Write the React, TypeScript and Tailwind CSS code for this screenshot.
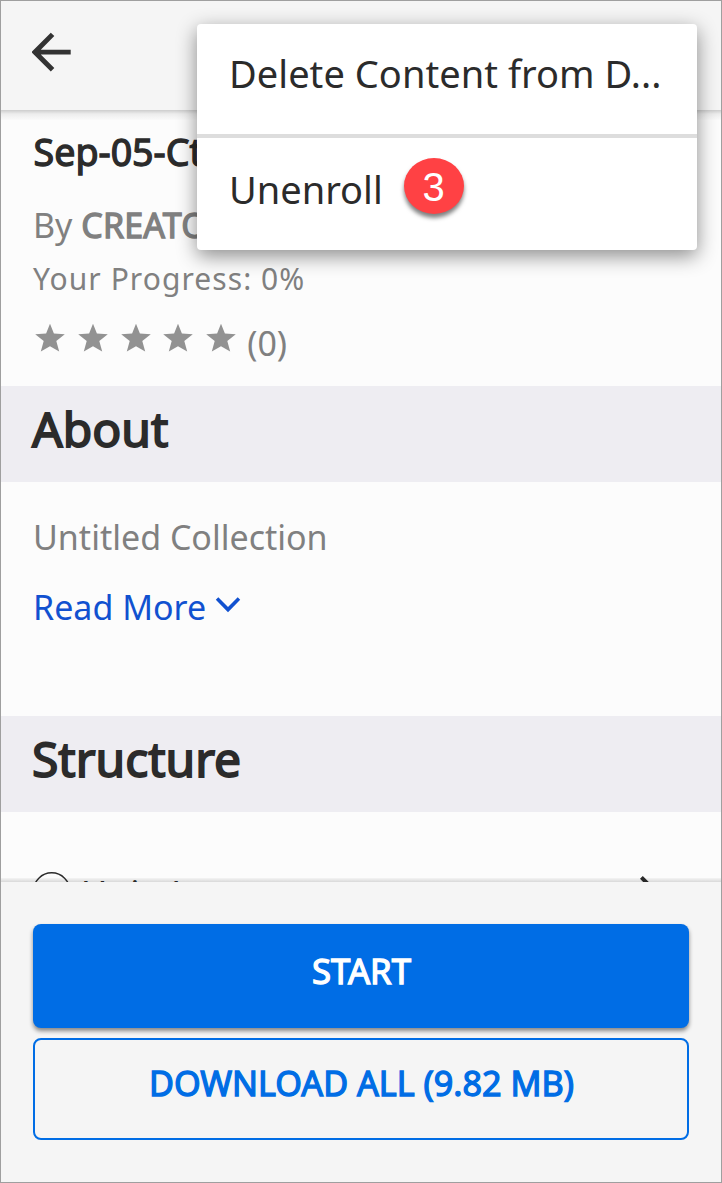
import React from "react";

function BackArrow() {
  return (
    <svg className="h-10 w-10 fill-[#333]" viewBox="0 0 40 40">
      <path d="M18.8 0.7 22.3 4 8.8 17.7H38.7V22.5H8.8L22.3 36.1 18.8 39.5 -0.6 20.1Z" />
    </svg>
  );
}

function Star() {
  return (
    <svg className="h-7 w-[30px] fill-[#929292]" viewBox="0 0 30 28">
      <path d="M15 -0.3 18.9 9.5 29.8 10.2 21.3 16.9 24.2 27.6 15 22.3 5.8 27.6 8.7 16.9 0.2 10.2 11.1 9.5Z" />
    </svg>
  );
}

function SectionHeading({ children }: { children: React.ReactNode }) {
  return (
    <h2 className="h-24 shrink-0 bg-[#eeedf2] pl-[31px] text-[48px] leading-[86px] text-[#2b2b2b] [-webkit-text-stroke:1.8px_#2b2b2b]">
      {children}
    </h2>
  );
}

export default function App() {
  return (
    <div className="relative flex h-[1183px] w-[722px] flex-col overflow-hidden border border-[#9f9f9f] bg-[#fcfcfc] font-['Noto_Sans',sans-serif] whitespace-nowrap text-[#808080]">
      <header className="relative flex h-[109px] shrink-0 items-start bg-[#f5f5f5] pt-[31px] pl-[31px]">
        <BackArrow />
        <div className="absolute inset-x-0 top-full h-[10px] bg-linear-to-b from-[#cdcdcd] via-[#ededed] via-40% to-[#fafafa]" />
      </header>

      <main className="flex h-[772px] shrink-0 flex-col overflow-hidden">
        <div className="flex h-[276px] shrink-0 flex-col pt-[21px] pl-8">
          <h1 className="pl-[0.6px] text-[37.6px] leading-[41px] text-[#2b2b2b] [-webkit-text-stroke:1.3px_#2b2b2b]">Sep-05-Ctc</h1>
          <p className="mt-[31px] text-[34px] leading-[45px]">
            By <span className="tracking-[0.15px] [-webkit-text-stroke:1.3px_#808080]">CREATOR</span>
          </p>
          <p className="mt-[10px] text-[30px] leading-[41px] tracking-[1.06px]">Your Progress: 0%</p>
          <div className="mt-5 flex h-[47px] items-start">
            <div className="flex gap-[12.8px] pt-[5px] pl-[2px]">
              <Star />
              <Star />
              <Star />
              <Star />
              <Star />
            </div>
            <span className="ml-[11px] text-[34px] leading-[49px]">(0)</span>
          </div>
        </div>

        <SectionHeading>About</SectionHeading>
        <div className="h-[234px] shrink-0 pt-8 pl-8">
          <p className="text-[34px] leading-[46px]">Untitled Collection</p>
          <a className="mt-6 flex text-[34px] leading-[46px] text-[#1151d0]">
            Read More
            <svg className="mt-3 ml-[9px] h-[18px] w-[26px] fill-current" viewBox="0 0 26 18">
              <path d="M3.3 1.2 13 10.9 22.7 1.2 25.2 3.8 13 16.2 0.8 3.8Z" />
            </svg>
          </a>
        </div>

        <SectionHeading>Structure</SectionHeading>
        <div className="flex h-[100px] shrink-0 items-start pt-[56px] pr-8 pl-8 text-[#2b2b2b]">
          <svg className="mt-1 h-[38px] w-[38px] fill-none stroke-[#2b2b2b]" viewBox="0 0 38 38" strokeWidth="1.4">
            <circle cx="18.7" cy="19" r="18.2" />
          </svg>
          <span className="ml-[10px] grow text-[36px] leading-[52px] tracking-[0.3px]">Unit-1</span>
          <svg className="mt-2 mr-[25px] h-[30px] w-6 fill-current" viewBox="0 0 24 30">
            <path d="M2.8 0 0 2.8 11.5 14.5 0 26.2 2.8 29 17.3 14.5Z" />
          </svg>
        </div>
      </main>

      <footer className="relative flex grow flex-col bg-[#f5f5f5] px-8 pt-[42px]">
        <div className="absolute inset-x-0 bottom-full h-1 bg-linear-to-b from-black/3 to-black/14" />
        <button className="h-[104px] rounded-lg bg-[#006de5] pb-[10px] pl-px text-[34.7px] text-white shadow-[0_3px_4px_rgba(0,0,0,0.45)] [-webkit-text-stroke:1.3px_#fff]">
          START
        </button>
        <button className="mt-[10px] h-[102px] rounded-lg border-2 border-[#006de5] pb-[12px] pl-px text-[34.2px] text-[#006de5] [-webkit-text-stroke:1.3px_#006de5]">
          DOWNLOAD ALL (9.82 MB)
        </button>
      </footer>

      <div className="absolute top-[23px] left-[196px] flex h-[226px] w-[500px] flex-col rounded-[4px] bg-white text-[38px] text-[#2b2b2b] shadow-[0_6px_20px_rgba(0,0,0,0.45)]">
        <div className="h-[110px] pl-8 leading-[98px] tracking-[0.05px]">Delete Content from D...</div>
        <div className="h-1 bg-[#dddddd]" />
        <div className="flex pl-8 leading-[102px]">
          Unenroll
          <span className="mt-5 ml-[21px] flex h-14 w-[60px] items-center justify-center rounded-[50%] bg-[#ff4144] pt-[2px] font-['Liberation_Sans',sans-serif] text-[40px] leading-none text-white shadow-[0_4px_4px_rgba(0,0,0,0.5)]">
            3
          </span>
        </div>
      </div>
    </div>
  );
}
